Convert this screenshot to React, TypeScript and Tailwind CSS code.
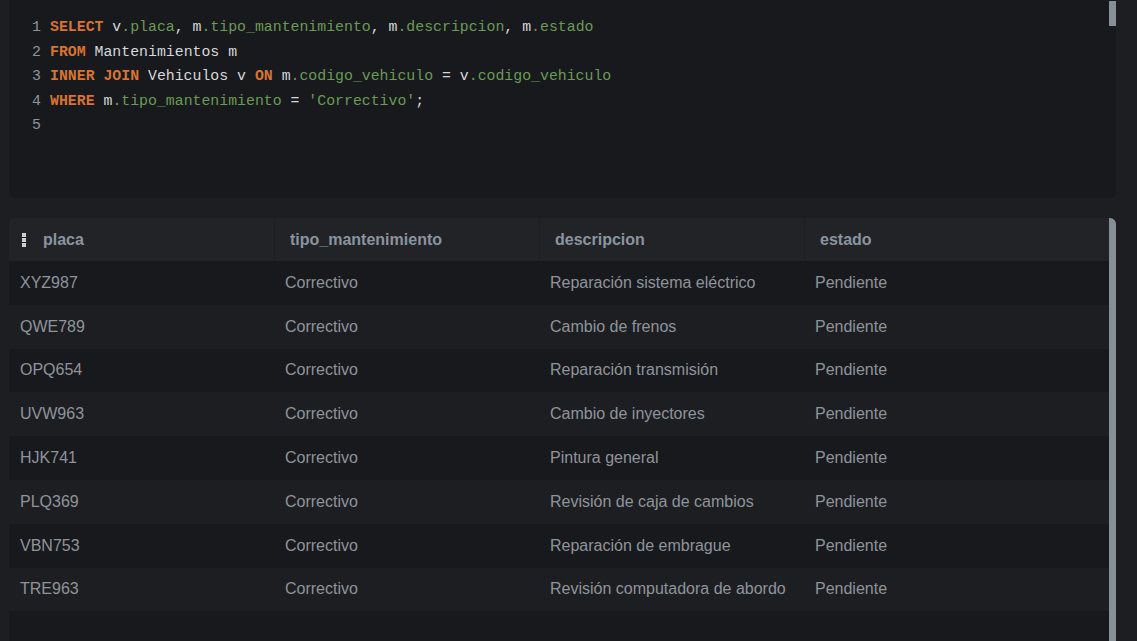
import React from 'react';

type Row = { placa: string; tipo: string; descripcion: string; estado: string };

const rows: Row[] = [
  { placa: 'XYZ987', tipo: 'Correctivo', descripcion: 'Reparación sistema eléctrico', estado: 'Pendiente' },
  { placa: 'QWE789', tipo: 'Correctivo', descripcion: 'Cambio de frenos', estado: 'Pendiente' },
  { placa: 'OPQ654', tipo: 'Correctivo', descripcion: 'Reparación transmisión', estado: 'Pendiente' },
  { placa: 'UVW963', tipo: 'Correctivo', descripcion: 'Cambio de inyectores', estado: 'Pendiente' },
  { placa: 'HJK741', tipo: 'Correctivo', descripcion: 'Pintura general', estado: 'Pendiente' },
  { placa: 'PLQ369', tipo: 'Correctivo', descripcion: 'Revisión de caja de cambios', estado: 'Pendiente' },
  { placa: 'VBN753', tipo: 'Correctivo', descripcion: 'Reparación de embrague', estado: 'Pendiente' },
  { placa: 'TRE963', tipo: 'Correctivo', descripcion: 'Revisión computadora de abordo', estado: 'Pendiente' },
];

const K = ({ children }: { children: React.ReactNode }) => (
  <span className="font-bold text-[#d9732f]">{children}</span>
);
const F = ({ children }: { children: React.ReactNode }) => <span className="text-[#6a9a55]">{children}</span>;

const lines: React.ReactNode[] = [
  <>
    <K>SELECT</K> v<F>.placa</F>, m<F>.tipo_mantenimiento</F>, m<F>.descripcion</F>, m<F>.estado</F>
  </>,
  <>
    <K>FROM</K> Mantenimientos m
  </>,
  <>
    <K>INNER JOIN</K> Vehiculos v <K>ON</K> m<F>.codigo_vehiculo</F> = v<F>.codigo_vehiculo</F>
  </>,
  <>
    <K>WHERE</K> m<F>.tipo_mantenimiento</F> = <F>'Correctivo'</F>;
  </>,
  <></>,
];

function KebabIcon() {
  return (
    <span className="flex flex-col gap-[1px]">
      <span className="h-[4px] w-[4px] bg-[#c9ced4]" />
      <span className="h-[4px] w-[4px] bg-[#c9ced4]" />
      <span className="h-[4px] w-[4px] bg-[#c9ced4]" />
    </span>
  );
}

export default function App() {
  return (
    <div className="h-[641px] overflow-hidden bg-[#1d1e22] px-[9px] pr-[21px]">
      {/* editor */}
      <section className="relative h-[198px] rounded-b-[6px] bg-[#18191d] pt-[15px]">
        <div className="absolute right-0 top-[1px] h-[25px] w-[7px] bg-[#868e96]" />
        <div className="font-['Liberation_Mono',monospace] text-[14.85px] leading-[24.5px] text-[#d6d8da]">
          {lines.map((line, i) => (
            <div key={i} className="flex whitespace-pre">
              <span className="w-[41px] pr-[9px] text-right text-[#8d959c]">{i + 1}</span>
              <span>{line}</span>
            </div>
          ))}
        </div>
      </section>

      {/* results */}
      <section className="mt-[20px] flex h-[423px] overflow-hidden rounded-tl-[4px] rounded-tr-[6px] bg-[#18191d] font-['Liberation_Sans',Arial,sans-serif] text-[16px]">
        <div className="min-w-0 flex-1">
          <div className="flex h-[43px] items-center bg-[#222327] font-bold text-[#8a949e]">
            <div className="flex h-full w-[266px] items-center gap-[17px] border-r border-[#1d1e21] pl-[13px]">
              <KebabIcon />
              <span>placa</span>
            </div>
            <div className="flex h-full w-[265px] items-center border-r border-[#1d1e21] pl-[15px]">tipo_mantenimiento</div>
            <div className="flex h-full w-[265px] items-center border-r border-[#1d1e21] pl-[15px]">descripcion</div>
            <div className="flex h-full flex-1 items-center pl-[15px]">estado</div>
          </div>
          {rows.map((r, i) => (
            <div
              key={r.placa}
              className={`flex h-[43.8px] items-center text-[#8e949a] ${i % 2 === 0 ? 'bg-[#18191d]' : 'bg-[#1d1e22]'}`}
            >
              <div className="w-[266px] pl-[11px]">{r.placa}</div>
              <div className="w-[265px] pl-[10px]">{r.tipo}</div>
              <div className="w-[265px] pl-[10px]">{r.descripcion}</div>
              <div className="flex-1 pl-[10px]">{r.estado}</div>
            </div>
          ))}
        </div>
        <div className="w-[7px] bg-[#868e96]" />
      </section>
    </div>
  );
}
